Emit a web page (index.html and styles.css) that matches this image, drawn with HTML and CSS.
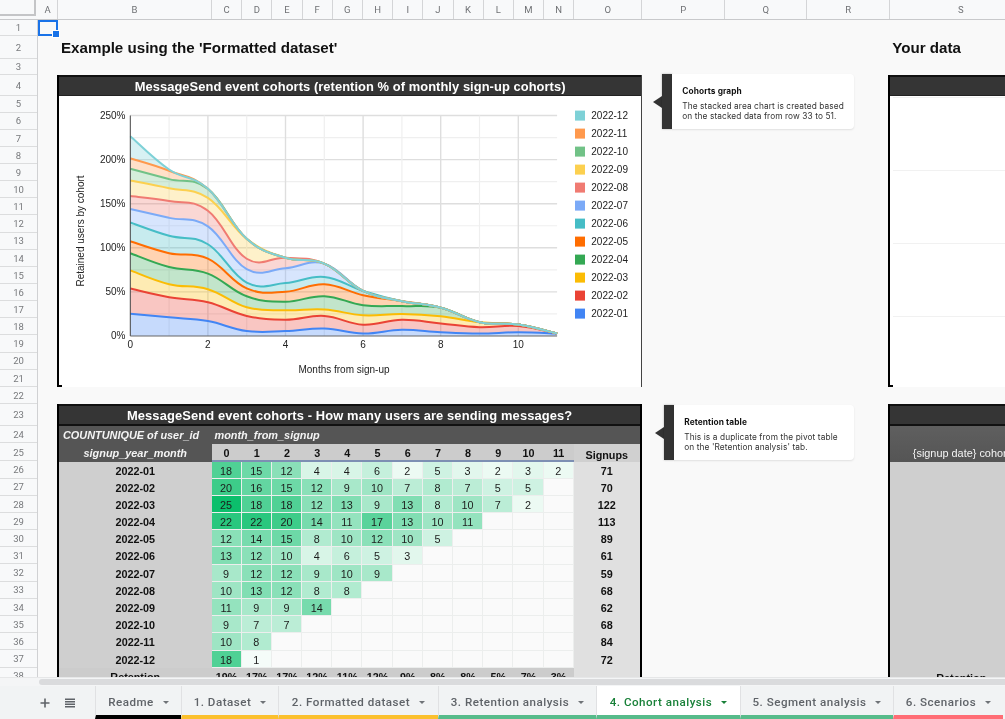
FILE: index.html
```html
<!DOCTYPE html>
<html lang="en">
<head>
<meta charset="utf-8">
<title>Cohort analysis</title>
<link rel="stylesheet" href="styles.css">
</head>
<body>
<div class="app">
  <div class="col-head">
    <div class="corner"></div>
    <div class="cols">
      <span>A</span><span>B</span><span>C</span><span>D</span><span>E</span><span>F</span><span>G</span><span>H</span><span>I</span><span>J</span><span>K</span><span>L</span><span>M</span><span>N</span><span>O</span><span>P</span><span>Q</span><span>R</span><span>S</span>
    </div>
  </div>
  <div class="main">
    <div class="row-head" id="rowHead"></div>
    <div class="sheet">
      <div class="sel"></div>
      <h1 class="heading heading-left">Example using the 'Formatted dataset'</h1>
      <h1 class="heading heading-right">Your data</h1>

      <section class="panel chart-panel">
        <div class="bar-title">MessageSend event cohorts (retention % of monthly sign-up cohorts)</div>
        <svg class="chart" id="chart" viewBox="59 96 583 292" width="583" height="292"></svg>
      </section>

      <aside class="note note-chart">
        <i class="note-arrow"></i><i class="note-bar"></i>
        <div class="note-card">
          <b>Cohorts graph</b>
          <p>The stacked area chart is created based on the stacked data from row 33 to 51.</p>
        </div>
      </aside>

      <section class="panel your-chart">
        <div class="bar-title"></div>
        <div class="your-plot"><i></i><i></i><i></i><i></i><i class="end"></i></div>
      </section>

      <section class="panel pivot-panel">
        <div class="bar-title bar-title-table">MessageSend event cohorts - How many users are sending messages?</div>
        <div class="pivot" id="pivot">
          <div class="ph ph-a">COUNTUNIQUE of user_id</div>
          <div class="ph ph-b">month_from_signup</div>
          <div class="ph ph-c">signup_year_month</div>
        </div>
      </section>

      <aside class="note note-table">
        <i class="note-arrow"></i><i class="note-bar"></i>
        <div class="note-card">
          <b>Retention table</b>
          <p>This is a duplicate from the pivot table on the 'Retention analysis' tab.</p>
        </div>
      </aside>

      <section class="panel your-table">
        <div class="bar-title bar-title-table"></div>
        <div class="your-head">{signup date} cohort</div>
        <div class="your-body"><span>Retention</span></div>
      </section>
    </div>
  </div>
  <div class="hscroll"><div class="thumb"></div></div>
  <nav class="tabbar">
    <div class="tools">
      <svg width="12" height="12" viewBox="0 0 12 12"><path d="M5.2 1.5h1.6v3.7h3.7v1.6H6.8v3.7H5.2V6.8H1.5V5.2h3.7z"/></svg>
      <svg width="12" height="12" viewBox="0 0 12 12"><path d="M1 1.5h10v1.5H1zM1 4h10v1.5H1zM1 6.5h10V8H1zM1 9h10v1.5H1z"/></svg>
    </div>
    <div class="tab t-black w-readme">Readme<i></i></div>
    <div class="tab t-yellow w-data">1. Dataset<i></i></div>
    <div class="tab t-yellow w-form">2. Formatted dataset<i></i></div>
    <div class="tab t-green w-ret">3. Retention analysis<i></i></div>
    <div class="tab t-green active w-coh">4. Cohort analysis<i></i></div>
    <div class="tab t-green w-seg">5. Segment analysis<i></i></div>
    <div class="tab t-red w-sce">6. Scenarios<i></i></div>
  </nav>
</div>
<script src="script.js"></script>
</body>
</html>
```
FILE: styles.css
```css
* { box-sizing: border-box; }
html, body { margin: 0; height: 100%; overflow: hidden; }
body { font-family: "Liberation Sans", Arial, sans-serif; color: #111; background: #f9f9f9; }
.app { width: 1005px; height: 719px; display: flex; flex-direction: column; overflow: hidden; filter: blur(.4px); }

/* column header */
.col-head { display: flex; height: 20px; flex: none; background: #f8f9fa; border-bottom: 1px solid #c8c9cb; }
.corner { width: 36px; flex: none; margin: 0 2px 3px 0; border-right: 2px solid #c4c5c7; border-bottom: 2px solid #c4c5c7; }
.cols { flex: 1; display: grid; overflow: hidden; grid-template-columns: 20px 154px repeat(12, 30.2px) 68px 83px 82px 83px 142px; }
.cols span { font: 9.5px/19px Roboto, sans-serif; color: #6f7174; text-align: center; border-right: 1px solid #d4d5d7; white-space: nowrap; }

.main { flex: 1; min-height: 0; display: flex; overflow: hidden; }

/* row header */
.row-head { width: 38px; flex: none; display: grid; border-right: 1px solid #d0d1d3; background: #f8f9fa;
  grid-template-rows: 16px 22.5px 16.5px 20.5px repeat(18, 17.15px) 21.8px 17.5px 18px repeat(13, 17.2px); }
.row-head span { font: 9.5px/1 Roboto, sans-serif; color: #77797c; display: flex; align-items: center; justify-content: center; padding-top: 1px; border-bottom: 1px solid #dcddde; }

/* sheet grid */
.sheet { flex: 1; min-width: 0; display: grid; overflow: hidden; background: #f9f9f9;
  grid-template-columns: 20px 154px repeat(12, 30.2px) 68px 83px 82px 83px 142px;
  grid-template-rows: 16px 22.5px 16.5px 20.5px repeat(18, 17.15px) 21.8px 17.5px 18px repeat(13, 17.2px); }

.sel { grid-column: 1; grid-row: 1; border: 2px solid #1a73e8; position: relative; }
.sel::after { content: ""; position: absolute; right: -4px; bottom: -4px; width: 6px; height: 6px; background: #1a73e8; border: 1px solid #fff; }

.heading { margin: 0; font: bold 15.15px/24px "Liberation Sans", Arial, sans-serif; color: #111; white-space: nowrap; }
.heading-left { grid-column: 2 / 15; grid-row: 2; padding-left: 3px; }
.heading-right { grid-column: 19; grid-row: 2; padding-left: 2px; }

.panel { display: flex; flex-direction: column; border-left: 2px solid #000; min-width: 0; min-height: 0; overflow: hidden; }
.bar-title { height: 21px; flex: none; background: #353535; border-top: 2px solid #111; border-bottom: 1px solid #222; color: #fff; font: bold 12.9px/20px "Liberation Sans", Arial, sans-serif; letter-spacing: .06px; text-align: center; white-space: nowrap; }
.bar-title-table { height: 22px; border-bottom: 2px solid #111; letter-spacing: .12px; line-height: 19px; }

.chart-panel { grid-column: 2 / 16; grid-row: 4 / 22; margin-left: -1px; background: #fff; border-right: 1px solid #444; position: relative; }
.chart-panel::after, .your-chart::after { content: ""; position: absolute; left: 0; bottom: 0; width: 3px; height: 2px; background: #000; }
.chart { display: block; flex: none; }
.chart text { font-family: "Liberation Sans", Arial, sans-serif; font-size: 10px; fill: #222; }

.your-chart { grid-column: 19; grid-row: 4 / 22; margin-left: -2px; background: #fff; position: relative; }
.your-plot { flex: 1; display: flex; flex-direction: column; gap: 72px; padding-top: 1px; }
.your-plot i { display: block; height: 1px; background: #f1f1f1; margin-left: 3px; }
.your-plot i.end { margin-top: auto; height: 2px; background: #cdcdcd; }

.pivot-panel { grid-column: 2 / 16; grid-row: 23 / 39; margin-left: -1px; border-right: 2px solid #000; height: 285px; }
.pivot { display: grid; flex: none; grid-template-columns: 152.5px repeat(12, 30.2px) 66px; grid-template-rows: 17.5px 18px repeat(13, 17.2px); }
.ph { background: #555; color: #f4f4f4; font: italic bold 10.9px/19px "Liberation Sans", Arial, sans-serif; white-space: nowrap; }
.ph-a { grid-column: 1; grid-row: 1; padding-left: 4px; }
.ph-b { grid-column: 2 / 15; grid-row: 1; padding-left: 3px; }
.ph-c { grid-column: 1; grid-row: 2; text-align: center; line-height: 18px; }
.pc { font-size: 10.8px; line-height: 18.5px; height: 100%; overflow: hidden; text-align: center; white-space: nowrap; border-right: 1px solid #eceeed; border-bottom: 1px solid #eceeed; color: #1c1c1c; }
.pc-empty { background: #fafafa; }
.pc-head { background: #ccc; font-weight: bold; border: 0; border-bottom: 2px solid #7d8fb3; line-height: 18px; color: #111; }
.pc-sign { background: #d0d0d0; font-weight: bold; border: 0; line-height: 22px; color: #111; }
.pc-label { background: #cfcfcf; font-weight: bold; border: 0; color: #111; }
.pc-total { background: #e0e0e0; font-weight: bold; border: 0; color: #111; }
.pc-foot { background: #ccc; font-weight: bold; border: 0; color: #111; }

.your-table { grid-column: 19; grid-row: 23 / 39; margin-left: -2px; height: 285px; background: #cfcfcf; }
.your-head { height: 35.5px; flex: none; background: linear-gradient(#5f5f5f, #555); color: #f4f4f4; font-size: 10.9px; text-align: center; padding-top: 21px; white-space: nowrap; }
.your-body { flex: 1; display: flex; align-items: flex-end; justify-content: center; font-size: 10.9px; font-weight: bold; }
.your-body span { line-height: 17px; margin-bottom: 2px; }

/* side notes */
.note { grid-column: 16 / 19; display: flex; align-items: stretch; height: 55px; align-self: start; }
.note-chart { grid-row: 4 / 8; margin: -1px 36px 0 11px; }
.note-table { grid-row: 23 / 27; margin: 1px 36px 0 13px; }
.note-arrow { width: 0; height: 0; flex: none; align-self: center; border-style: solid; border-width: 6px 9px 6px 0; border-color: transparent #333 transparent transparent; }
.note-bar { width: 10px; flex: none; background: #333; box-shadow: 0 0 2px rgba(0,0,0,.3); }
.note-card { flex: 1; min-width: 0; background: #fff; border-radius: 0 4px 4px 0; box-shadow: 0 1px 2px rgba(0,0,0,.1); padding: 13px 6px 0 10px; font-family: Inter, "Noto Sans", sans-serif; font-size: 8.3px; letter-spacing: .1px; line-height: 9.3px; color: #333; }
.note-card b { display: block; color: #111; font-weight: 700; letter-spacing: .1px; margin-bottom: 6px; }
.note-card p { margin: 0; }

/* scrollbar */
.hscroll { height: 9px; flex: none; background: #f4f5f6; border-top: 1px solid #e6e7e8; padding: 1px 0 1px 39px; }
.thumb { height: 100%; background: #dadbdd; border-radius: 4px 0 0 4px; }

/* tabs */
.tabbar { height: 33px; flex: none; display: flex; background: #f1f3f4; }
.tools { width: 95px; flex: none; display: flex; align-items: center; gap: 13px; padding: 0 0 0 39px; }
.tools svg { fill: #5f6368; display: block; }
.tab { flex: none; display: flex; align-items: center; justify-content: center; gap: 9px; padding-top: 4px; border-left: 1px solid #e0e1e3; border-bottom: 4px solid; font: 500 11.6px/1 Roboto, sans-serif; letter-spacing: .5px; color: #5f6368; white-space: nowrap; }
.tab i { width: 0; height: 0; border-style: solid; border-width: 3.5px 3.5px 0; border-color: #6f7377 transparent transparent; }
.t-black { border-bottom-color: #000; }
.t-yellow { border-bottom-color: #fbc02d; }
.t-green { border-bottom-color: #57bb8a; }
.t-red { border-bottom-color: #ff6d75; }
.active { background: #fff; color: #188038; }
.active i { border-top-color: #188038; }
.w-readme { width: 86px; }
.w-data { width: 97px; }
.w-form { width: 160px; }
.w-ret { width: 158px; }
.w-coh { width: 144px; }
.w-seg { width: 153px; }
.w-sce { width: 110px; }
```
FILE: script.js
```js
var DATA = [
  ["2022-01", 71, [18,15,12,4,4,6,2,5,3,2,3,2]],
  ["2022-02", 70, [20,16,15,12,9,10,7,8,7,5,5]],
  ["2022-03", 122, [25,18,18,12,13,9,13,8,10,7,2]],
  ["2022-04", 113, [22,22,20,14,11,17,13,10,11]],
  ["2022-05", 89, [12,14,15,8,10,12,10,5]],
  ["2022-06", 61, [13,12,10,4,6,5,3]],
  ["2022-07", 59, [9,12,12,9,10,9]],
  ["2022-08", 68, [10,13,12,8,8]],
  ["2022-09", 62, [11,9,9,14]],
  ["2022-10", 68, [9,7,7]],
  ["2022-11", 84, [10,8]],
  ["2022-12", 72, [18,1]]
];
var COLORS = ["#4285f4","#ea4335","#fbbc04","#34a853","#ff6d01","#46bdc6","#7baaf7","#f07b72","#fcd04f","#71c287","#ff994d","#7ed1d7"];
var RET = ["19%","17%","17%","12%","11%","12%","9%","8%","8%","5%","7%","3%"];

/* row numbers */
var rh = document.getElementById("rowHead");
for (var r = 1; r <= 38; r++) {
  var s = document.createElement("span");
  s.textContent = r;
  rh.appendChild(s);
}

/* pivot table */
var pivot = document.getElementById("pivot");
function cell(cls, text, bg) {
  var d = document.createElement("div");
  d.className = "pc " + cls;
  d.textContent = text === undefined ? "" : text;
  if (bg) d.style.background = bg;
  pivot.appendChild(d);
  return d;
}
var o = cell("", ""); o.style.cssText = "grid-column:14;grid-row:1;background:#555;border:0";
for (var m = 0; m < 12; m++) cell("pc-head", m);
cell("pc-sign", "Signups");
function heat(v) {
  var t = v / 25;
  return "rgb(" + Math.round(255 - t * 243) + "," + Math.round(255 - t * 64) + "," + Math.round(255 - t * 147) + ")";
}
DATA.forEach(function (row) {
  cell("pc-label", row[0]);
  for (var i = 0; i < 12; i++) {
    var v = row[2][i];
    if (v === undefined) cell("pc-empty", "");
    else cell("", v, heat(v));
  }
  cell("pc-total", row[1]);
});
cell("pc-foot", "Retention");
RET.forEach(function (t) { cell("pc-foot", t); });
cell("pc-total", "");

/* stacked area chart */
var NS = "http://www.w3.org/2000/svg";
var svg = document.getElementById("chart");
function el(name, attrs, text) {
  var e = document.createElementNS(NS, name);
  for (var k in attrs) e.setAttribute(k, attrs[k]);
  if (text !== undefined) e.textContent = text;
  svg.appendChild(e);
  return e;
}
var X0 = 130.3, DX = 38.8, Y0 = 336, PY = 0.882;
function X(m) { return X0 + m * DX; }
function Y(p) { return Y0 - p * PY; }

/* gridlines */
for (var p = 25; p <= 250; p += 25) {
  var major = p % 50 === 0;
  el("line", { x1: X0, x2: X(11), y1: Y(p), y2: Y(p), stroke: major ? "#dedede" : "#efefef", "stroke-width": major ? 1.4 : 1.2 });
}
for (var mm = 1; mm <= 10; mm++) {
  var maj = mm % 2 === 0;
  el("line", { x1: X(mm), x2: X(mm), y1: Y(250), y2: Y0, stroke: maj ? "#dedede" : "#efefef", "stroke-width": maj ? 1.4 : 1.2 });
}

/* stacks */
var cum = [], base = [0,0,0,0,0,0,0,0,0,0,0,0];
DATA.forEach(function (row) {
  var top = [];
  for (var i = 0; i < 12; i++) {
    var v = row[2][i] || 0;
    top.push(base[i] + v / row[1] * 100);
  }
  cum.push(top);
  base = top;
});
var K = 0.2;
function pts(arr) { return arr.map(function (v, i) { return [X(i), Y(v)]; }); }
function curve(P, reverse) {
  var a = reverse ? P.slice().reverse() : P, d = "";
  for (var i = 0; i < a.length - 1; i++) {
    var p0 = a[Math.max(i - 1, 0)], p1 = a[i], p2 = a[i + 1], p3 = a[Math.min(i + 2, a.length - 1)];
    d += "C" + (p1[0] + (p2[0] - p0[0]) * K).toFixed(2) + " " + (p1[1] + (p2[1] - p0[1]) * K).toFixed(2) + " " +
         (p2[0] - (p3[0] - p1[0]) * K).toFixed(2) + " " + (p2[1] - (p3[1] - p1[1]) * K).toFixed(2) + " " +
         p2[0].toFixed(2) + " " + p2[1].toFixed(2);
  }
  return d;
}
var zero = [0,0,0,0,0,0,0,0,0,0,0,0];
cum.forEach(function (top, s) {
  var P = pts(top), B = pts(s ? cum[s - 1] : zero);
  var d = "M" + P[0][0] + " " + P[0][1] + curve(P, false) + "L" + B[11][0] + " " + B[11][1] + curve(B, true) + "Z";
  el("path", { d: d, fill: COLORS[s], "fill-opacity": 0.3, stroke: "none" });
});
cum.forEach(function (top, s) {
  var P = pts(top);
  el("path", { d: "M" + P[0][0] + " " + P[0][1] + curve(P, false), fill: "none", stroke: COLORS[s], "stroke-width": 2 });
});

/* axes */
el("line", { x1: X0, x2: X0, y1: Y(250), y2: Y0, stroke: "#444", "stroke-width": 1 });
el("line", { x1: X0, x2: X(11), y1: Y0, y2: Y0, stroke: "#666", "stroke-width": 1 });
for (var q = 0; q <= 250; q += 50) el("text", { x: 125.5, y: Y(q) + 3, "text-anchor": "end" }, q + "%");
for (var n = 0; n <= 10; n += 2) el("text", { x: X(n), y: 348, "text-anchor": "middle" }, n);
el("text", { x: 344, y: 373, "text-anchor": "middle" }, "Months from sign-up");
el("text", { x: 0, y: 0, "text-anchor": "middle", transform: "translate(84 231) rotate(-90)" }, "Retained users by cohort");

/* legend */
for (var l = 11; l >= 0; l--) {
  var y = 115.6 + (11 - l) * 18;
  el("rect", { x: 575, y: y - 5, width: 10, height: 10, fill: COLORS[l] });
  el("text", { x: 591.3, y: y + 3.5 }, DATA[l][0]);
}
```
